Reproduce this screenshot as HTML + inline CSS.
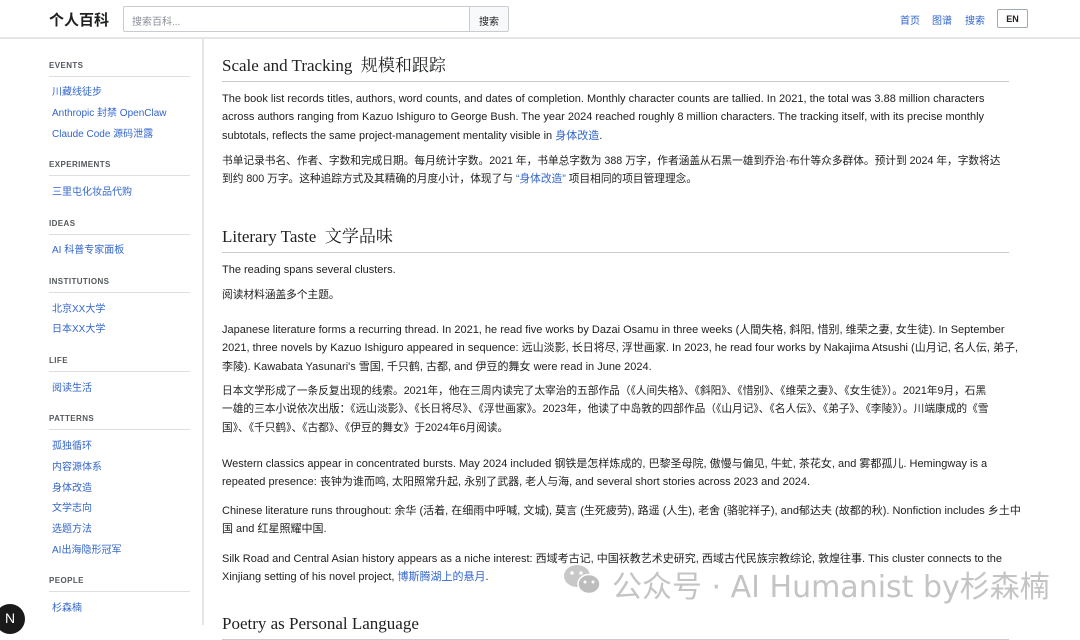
<!DOCTYPE html>
<html><head><meta charset="utf-8"><style>
*{margin:0;padding:0;box-sizing:border-box}
body{width:1080px;height:625px;overflow:hidden;background:#fff;font-family:"Liberation Sans","Noto Sans CJK SC",sans-serif;color:#202122;position:relative}
.a{position:absolute;white-space:nowrap}
a{color:#3366cc;text-decoration:none}
.hdr{position:absolute;left:0;top:0;width:1080px;height:39px;border-bottom:2px solid #e4e5e7}
.logo{left:49px;top:9px;font-size:15px;font-weight:bold;color:#202122}
.search{left:123px;top:6px;width:347px;height:26px;border:1px solid #c8ccd1;border-radius:2px 0 0 2px;font-size:10px;color:#8a8f96;padding:6px 8px}
.sbtn{left:469px;top:6px;width:40px;height:26px;border:1px solid #c8ccd1;background:#f8f9fa;font-size:10px;text-align:center;padding-top:6px;border-radius:0 2px 2px 0}
.nav{top:12px;font-size:10px;color:#3366cc}
.en{left:997px;top:9px;width:31px;height:19px;border:1px solid #a2a9b1;border-radius:2px;font-size:9px;font-weight:bold;text-align:center;padding-top:4px}
.vline{position:absolute;left:202px;top:39px;width:2px;height:586px;background:#e4e5e7}
.sh{position:absolute;left:49px;width:141px;font-size:8px;font-weight:bold;color:#54595d;letter-spacing:.4px;border-bottom:1px solid #dcdfe2;padding-bottom:6px}
.sl{position:absolute;left:52px;font-size:10px;color:#3366cc}
.h2{position:absolute;left:222px;width:787px;font-family:"Liberation Serif","Noto Serif CJK SC",serif;font-size:17px;color:#202122;border-bottom:1px solid #c8ccd1;padding-bottom:5px}
.p{position:absolute;left:222px;font-size:11px;line-height:18.3px;white-space:nowrap;color:#202122}
.c{font-size:10.7px}
.wm{left:612px;top:562px;font-size:30px;color:#c4c4c4;font-family:"DejaVu Sans","Noto Sans CJK SC",sans-serif}
</style></head><body>
<div class="hdr"></div>
<div class="a logo">个人百科</div>
<div class="a search">搜索百科...</div>
<div class="a sbtn">搜索</div>
<div class="a nav" style="left:900px">首页</div>
<div class="a nav" style="left:932px">图谱</div>
<div class="a nav" style="left:965px">搜索</div>
<div class="a en">EN</div>
<div class="vline"></div>

<div class="sh" style="top:61px">EVENTS</div>
<div class="sl" style="top:83px">川藏线徒步</div>
<div class="sl" style="top:104px">Anthropic 封禁 OpenClaw</div>
<div class="sl" style="top:125px">Claude Code 源码泄露</div>
<div class="sh" style="top:160px">EXPERIMENTS</div>
<div class="sl" style="top:183px">三里屯化妆品代购</div>
<div class="sh" style="top:219px">IDEAS</div>
<div class="sl" style="top:241px">AI 科普专家面板</div>
<div class="sh" style="top:277px">INSTITUTIONS</div>
<div class="sl" style="top:300px">北京XX大学</div>
<div class="sl" style="top:320px">日本XX大学</div>
<div class="sh" style="top:356px">LIFE</div>
<div class="sl" style="top:379px">阅读生活</div>
<div class="sh" style="top:414px">PATTERNS</div>
<div class="sl" style="top:437px">孤独循环</div>
<div class="sl" style="top:458px">内容源体系</div>
<div class="sl" style="top:479px">身体改造</div>
<div class="sl" style="top:499px">文学志向</div>
<div class="sl" style="top:520px">选题方法</div>
<div class="sl" style="top:541px">AI出海隐形冠军</div>
<div class="sh" style="top:576px">PEOPLE</div>
<div class="sl" style="top:599px">杉森楠</div>
<div class="a" style="left:-5px;top:604px;width:30px;height:30px;border-radius:50%;background:#1a1a1a;color:#fff;font-size:14px;text-align:center;padding-top:6px">N</div>

<div class="h2" style="top:51px">Scale and Tracking&nbsp; 规模和跟踪</div>
<div class="p" style="top:90px">The book list records titles, authors, word counts, and dates of completion. Monthly character counts are tallied. In 2021, the total was 3.88 million characters<br>across authors ranging from Kazuo Ishiguro to George Bush. The year 2024 reached roughly 8 million characters. The tracking itself, with its precise monthly<br>subtotals, reflects the same project-management mentality visible in <a>身体改造</a>.</div>
<div class="p c" style="top:152px">书单记录书名、作者、字数和完成日期。每月统计字数。2021 年，书单总字数为 388 万字，作者涵盖从石黑一雄到乔治·布什等众多群体。预计到 2024 年，字数将达<br>到约 800 万字。这种追踪方式及其精确的月度小计，体现了与 <a>“身体改造”</a> 项目相同的项目管理理念。</div>

<div class="h2" style="top:222px">Literary Taste&nbsp; 文学品味</div>
<div class="p" style="top:261px">The reading spans several clusters.</div>
<div class="p c" style="top:286px">阅读材料涵盖多个主题。</div>
<div class="p" style="top:321px">Japanese literature forms a recurring thread. In 2021, he read five works by Dazai Osamu in three weeks (人間失格, 斜阳, 惜别, 维荣之妻, 女生徒). In September<br>2021, three novels by Kazuo Ishiguro appeared in sequence: 远山淡影, 长日将尽, 浮世画家. In 2023, he read four works by Nakajima Atsushi (山月记, 名人伝, 弟子,<br>李陵). Kawabata Yasunari's 雪国, 千只鹤, 古都, and 伊豆的舞女 were read in June 2024.</div>
<div class="p c" style="top:382px">日本文学形成了一条反复出现的线索。2021年，他在三周内读完了太宰治的五部作品（《人间失格》、《斜阳》、《惜别》、《维荣之妻》、《女生徒》）。2021年9月，石黑<br>一雄的三本小说依次出版：《远山淡影》、《长日将尽》、《浮世画家》。2023年，他读了中岛敦的四部作品（《山月记》、《名人伝》、《弟子》、《李陵》）。川端康成的《雪<br>国》、《千只鹤》、《古都》、《伊豆的舞女》于2024年6月阅读。</div>
<div class="p" style="top:455px">Western classics appear in concentrated bursts. May 2024 included 钢铁是怎样炼成的, 巴黎圣母院, 傲慢与偏见, 牛虻, 茶花女, and 雾都孤儿. Hemingway is a<br>repeated presence: 丧钟为谁而鸣, 太阳照常升起, 永别了武器, 老人与海, and several short stories across 2023 and 2024.</div>
<div class="p" style="top:502px">Chinese literature runs throughout: 余华 (活着, 在细雨中呼喊, 文城), 莫言 (生死疲劳), 路遥 (人生), 老舍 (骆驼祥子), and郁达夫 (故都的秋). Nonfiction includes 乡土中<br>国 and 红星照耀中国.</div>
<div class="p" style="top:550px">Silk Road and Central Asian history appears as a niche interest: 西域考古记, 中国祆教艺术史研究, 西域古代民族宗教综论, 敦煌往事. This cluster connects to the<br>Xinjiang setting of his novel project, <a>博斯腾湖上的悬月</a>.</div>
<div class="h2" style="top:614px">Poetry as Personal Language</div>

<svg class="a" style="left:562px;top:562px" width="42" height="36" viewBox="0 0 42 36"><ellipse cx="15" cy="14" rx="13" ry="11" fill="#c8c8c8"/><ellipse cx="27" cy="22" rx="11" ry="9.5" fill="#bdbdbd" stroke="#fff" stroke-width="1.5"/><circle cx="10" cy="11" r="1.8" fill="#fff"/><circle cx="19" cy="11" r="1.8" fill="#fff"/><circle cx="23" cy="20" r="1.5" fill="#fff"/><circle cx="31" cy="20" r="1.5" fill="#fff"/></svg>
<div class="a wm">公众号 · AI Humanist by杉森楠</div>
</body></html>
